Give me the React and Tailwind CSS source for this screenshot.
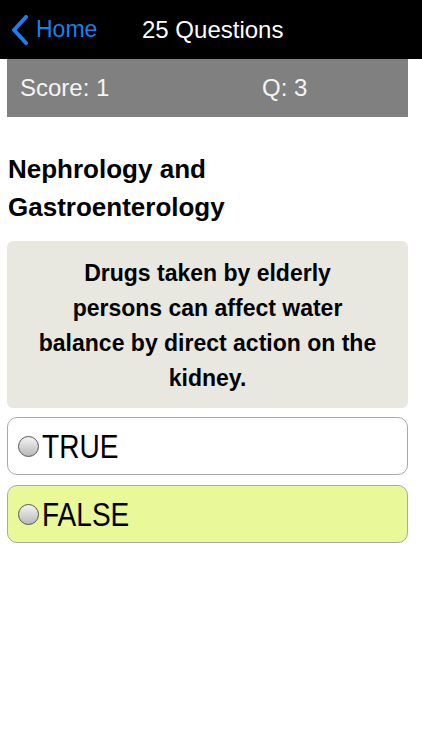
import { useState } from "react";

function Radio() {
  return (
    <span className="w-[21px] h-[21px] rounded-full border border-[#555] bg-gradient-to-b from-[#f4f4f4] to-[#b8b8b8] shrink-0" />
  );
}

function App() {
  const [picked, setPicked] = useState("FALSE");

  return (
    <div className="w-full min-h-screen bg-white" style={{ fontFamily: "'Liberation Sans', Arial, sans-serif" }}>
      <div className="h-[59px] bg-black flex items-center">
        <div className="flex items-center pl-[10px] w-[142px]">
          <svg width="20" height="30" viewBox="0 0 20 30" className="shrink-0">
            <path d="M16 2 L4 15 L16 28" fill="none" stroke="#1a7ff0" strokeWidth="4" strokeLinecap="round" strokeLinejoin="round" />
          </svg>
          <span className="text-[#1a7ff0] text-[23px] ml-[6px] leading-none">Home</span>
        </div>
        <span className="text-white text-[24px] font-medium leading-none">25 Questions</span>
      </div>

      <div className="pl-[7px] pr-[14px]">
        <div className="h-[58px] bg-[#808080] flex items-center text-[#f4f4f4] text-[24px]">
          <span className="pl-[13px] w-[255px]">Score: 1</span>
          <span>Q: 3</span>
        </div>

        <h1 className="mt-[33px] text-[26px] font-bold leading-[38px] text-black pl-[1px]">
          Nephrology and
          <br />
          Gastroenterology
        </h1>

        <div className="mt-[15px] bg-[#e8e8e1] rounded-[6px] px-2 pt-[15px] pb-[12px] text-center text-[23px] font-bold leading-[35px] text-black">
          Drugs taken by elderly
          <br />
          persons can affect water
          <br />
          balance by direct action on the
          <br />
          kidney.
        </div>

        <div className="mt-[9px] flex flex-col gap-[10px]">
          {["TRUE", "FALSE"].map((opt) => (
            <button
              key={opt}
              onClick={() => setPicked(opt)}
              className={
                "h-[58px] rounded-[10px] border border-[#a9a9a9] flex items-center gap-[3px] pl-[10px] text-[33px] text-black text-left " +
                (picked === opt ? "bg-[#e9f99a]" : "bg-white")
              }
            >
              <Radio />
              <span className="inline-block leading-none origin-left scale-x-[0.85]">{opt}</span>
            </button>
          ))}
        </div>
      </div>
    </div>
  );
}

export default App;
